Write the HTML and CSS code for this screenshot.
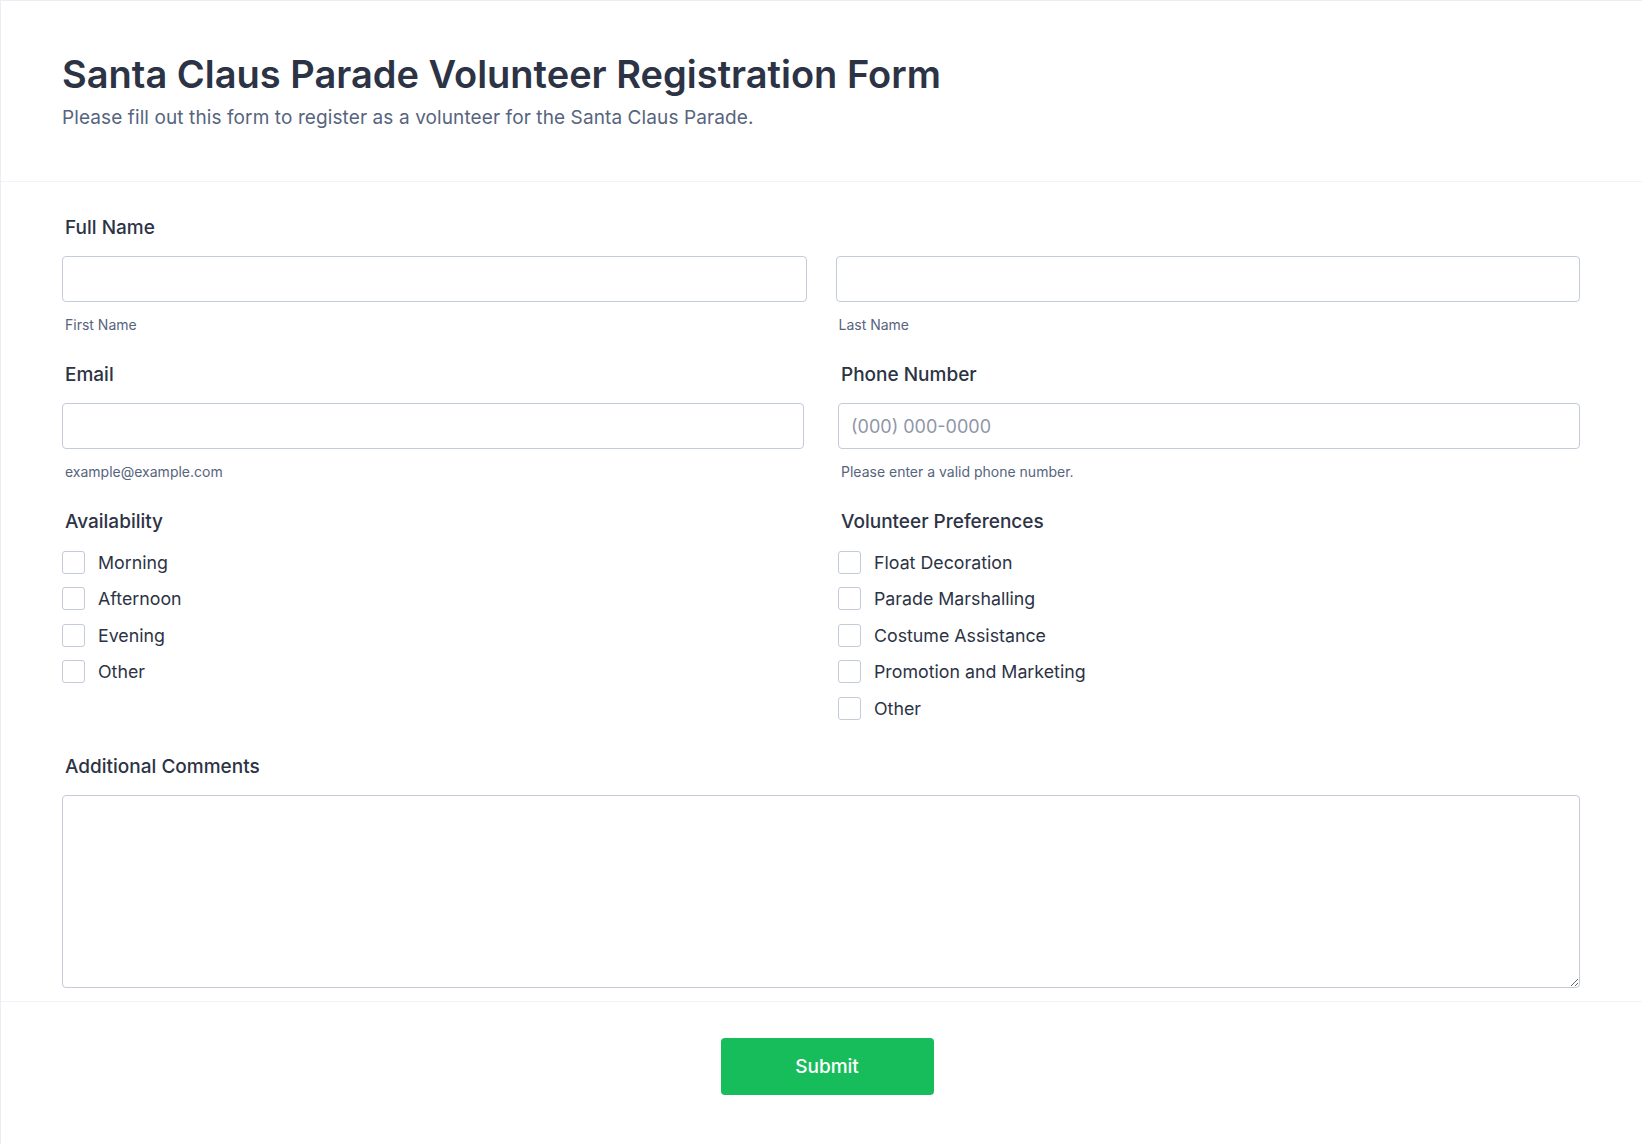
FILE: index.html
```html
<!DOCTYPE html>
<html lang="en">
<head>
<meta charset="utf-8">
<title>Santa Claus Parade Volunteer Registration Form</title>
<link rel="stylesheet" href="styles.css">
</head>
<body>
<div class="card">
  <header class="head">
    <h1 class="title">Santa Claus Parade Volunteer Registration Form</h1>
    <p class="subtitle">Please fill out this form to register as a volunteer for the Santa Claus Parade.</p>
  </header>
  <form class="body">
    <div class="field">
      <label class="label">Full Name</label>
      <div class="name-grid">
        <div class="sub">
          <input class="input" type="text">
          <span class="sublabel">First Name</span>
        </div>
        <div class="sub">
          <input class="input" type="text">
          <span class="sublabel">Last Name</span>
        </div>
      </div>
    </div>
    <div class="row">
      <div class="field">
        <label class="label">Email</label>
        <input class="input" type="text">
        <span class="sublabel">example@example.com</span>
      </div>
      <div class="field">
        <label class="label">Phone Number</label>
        <input class="input" type="text" placeholder="(000) 000-0000">
        <span class="sublabel">Please enter a valid phone number.</span>
      </div>
    </div>
    <div class="row checks-row">
      <div class="field">
        <label class="label">Availability</label>
        <div class="options">
          <label class="option"><span class="box"></span>Morning</label>
          <label class="option"><span class="box"></span>Afternoon</label>
          <label class="option"><span class="box"></span>Evening</label>
          <label class="option"><span class="box"></span>Other</label>
        </div>
      </div>
      <div class="field">
        <label class="label">Volunteer Preferences</label>
        <div class="options">
          <label class="option"><span class="box"></span>Float Decoration</label>
          <label class="option"><span class="box"></span>Parade Marshalling</label>
          <label class="option"><span class="box"></span>Costume Assistance</label>
          <label class="option"><span class="box"></span>Promotion and Marketing</label>
          <label class="option"><span class="box"></span>Other</label>
        </div>
      </div>
    </div>
    <div class="field comments">
      <label class="label">Additional Comments</label>
      <textarea class="textarea"></textarea>
    </div>
  </form>
  <footer class="foot">
    <button class="submit" type="button">Submit</button>
  </footer>
</div>
</body>
</html>
```

FILE: styles.css
```css
* { box-sizing: border-box; }
html, body { margin: 0; padding: 0; background: #ffffff; }
body {
  font-family: Inter, "Noto Sans", "Liberation Sans", sans-serif;
  color: #2c3345;
}
.card {
  border-top: 1px solid #ebecf4;
  border-left: 1px solid #ebecf4;
  min-height: 1144px;
}
.head {
  padding: 50px 62px 50px 61px;
  border-bottom: 1px solid #f2f3f9;
}
.title {
  margin: 0;
  font-size: 38px;
  line-height: 46px;
  font-weight: 600;
  color: #2c3345;
}
.subtitle {
  margin: 8px 0 0;
  font-size: 19px;
  line-height: 26px;
  letter-spacing: 0.1px;
  color: #57647e;
}
.body {
  padding: 34px 62px 13px 61px;
  border-bottom: 1px solid #f2f3f9;
  display: flex;
  flex-direction: column;
  gap: 29px;
}
.field { display: flex; flex-direction: column; }
.comments { margin-top: 5px; }
.label {
  font-size: 19px;
  line-height: 24px;
  font-weight: 500;
  color: #2c3345;
  padding-left: 3px;
  margin-bottom: 16px;
}
.checks-row .label { margin-bottom: 15px; }
.comments .label { margin-bottom: 16px; }
.name-grid {
  display: grid;
  grid-template-columns: 1fr 1fr;
  column-gap: 29px;
}
.sub { display: flex; flex-direction: column; }
.row {
  display: grid;
  grid-template-columns: 1fr 1fr;
  column-gap: 34px;
}
.input {
  height: 46px;
  border: 1px solid #c3cad8;
  border-radius: 4px;
  padding: 0 12px;
  font-family: inherit;
  font-size: 18px;
  color: #2c3345;
  background: #fff;
  outline: none;
}
.input::placeholder { color: #8f96a8; }
.sublabel {
  margin-top: 14px;
  font-size: 14px;
  line-height: 18px;
  color: #57647e;
  padding-left: 3px;
}
.options {
  display: flex;
  flex-direction: column;
  gap: 10.5px;
}
.option {
  display: flex;
  align-items: center;
  height: 26px;
  font-size: 17.8px;
  color: #2c3345;
  gap: 13px;
}
.box {
  width: 23px;
  height: 23px;
  border: 1px solid #c3cad8;
  border-radius: 3px;
  background: #fff;
  flex: none;
}
.textarea {
  height: 193px;
  border: 1px solid #c3cad8;
  border-radius: 4px;
  resize: vertical;
  font-family: inherit;
  font-size: 16px;
  outline: none;
}
.foot {
  display: flex;
  justify-content: center;
  padding: 36px 0 47px 11px;
}
.submit {
  width: 213px;
  height: 57px;
  border: none;
  border-radius: 4px;
  background: #18bd5b;
  color: #ffffff;
  font-family: inherit;
  font-size: 19px;
  font-weight: 500;
  cursor: pointer;
}
```
